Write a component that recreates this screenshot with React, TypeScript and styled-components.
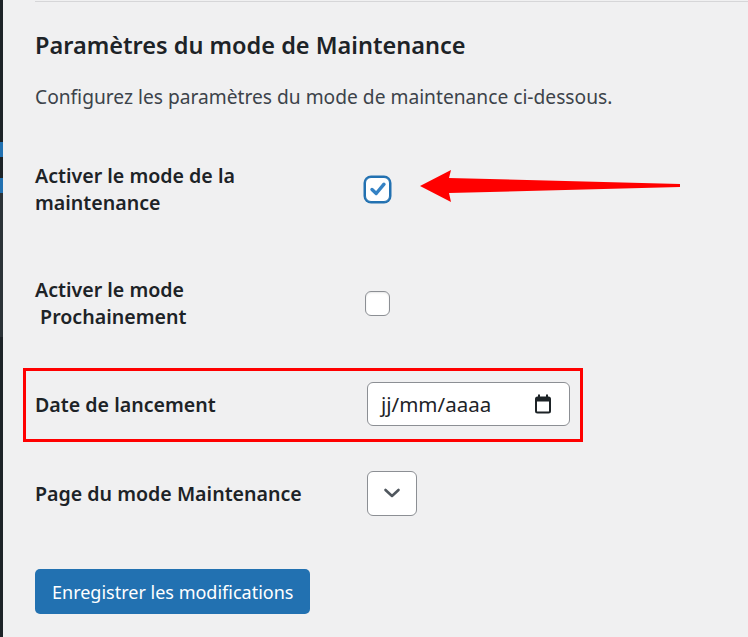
import styled, { createGlobalStyle } from "styled-components";

const GlobalStyle = createGlobalStyle`
    html, body {
        margin: 0;
        padding: 0;
        background: #f0f0f1;
    }
    body {
        font-family: "Noto Sans", "Segoe UI", sans-serif;
        color: #1d2327;
    }
`;

function Checkbox({ checked }: { checked?: boolean }) {
    return (
        <Box $checked={checked}>
            {checked && (
                <svg width="20" height="20" viewBox="0 0 20 20">
                    <path d="M4 10.5 L8.2 14.5 L16 5.2" fill="none" stroke="#3582c4" strokeWidth="3.4" strokeLinecap="round" strokeLinejoin="round" />
                </svg>
            )}
        </Box>
    );
}

function App() {
    return (
        <Page>
            <GlobalStyle />
            <Sidebar>
                <SideSeg $h={142} $c="#1d2327" />
                <SideSeg $h={15} $c="#2271b1" />
                <SideSeg $h={21} $c="#1d2327" />
                <SideSeg $h={15} $c="#2271b1" />
                <SideSeg $h={144} $c="#2c3338" />
                <SideSeg $h={300} $c="#1d2327" />
            </Sidebar>

            <Main>
                <TopRule />
                <Title>Paramètres du mode de Maintenance</Title>
                <Description>Configurez les paramètres du mode de maintenance ci-dessous.</Description>

                <Form>
                    <Row $h={114}>
                        <Label>Activer le mode de la<br />maintenance</Label>
                        <Field><Checkbox checked /></Field>
                    </Row>
                    <Row $h={114}>
                        <Label>Activer le mode<br />{"\u00a0"}Prochainement</Label>
                        <Field><Checkbox /></Field>
                    </Row>
                    <Row $h={88}>
                        <Highlight />
                        <Label>Date de lancement</Label>
                        <Field>
                            <DateField>
                                <span>jj/mm/aaaa</span>
                                <svg width="18" height="20" viewBox="0 0 18 20">
                                    <rect x="4" y="0.5" width="2" height="3.5" fill="#1d2327" />
                                    <rect x="12" y="0.5" width="2" height="3.5" fill="#1d2327" />
                                    <rect x="2" y="3.5" width="14" height="15" rx="1.5" fill="none" stroke="#1d2327" strokeWidth="2" />
                                    <rect x="2" y="3.5" width="14" height="4" fill="#1d2327" />
                                </svg>
                            </DateField>
                        </Field>
                    </Row>
                    <Row $h={90}>
                        <Label>Page du mode Maintenance</Label>
                        <Field>
                            <Select>
                                <svg width="18" height="12" viewBox="0 0 18 12">
                                    <path d="M2.5 3 L9 9 L15.5 3" fill="none" stroke="#50575e" strokeWidth="2.6" strokeLinecap="round" strokeLinejoin="round" />
                                </svg>
                            </Select>
                        </Field>
                    </Row>
                </Form>

                <SaveButton>Enregistrer les modifications</SaveButton>
            </Main>

            <Arrow width="266" height="36" viewBox="0 0 266 36">
                <polygon points="2,18 33,2 31,10 262,16 262,19 31,25 33,34" fill="#ff0000" />
            </Arrow>
        </Page>
    );
}

export default App;

const Page = styled.div`
    position: relative;
    display: flex;
    min-height: 637px;
    overflow: hidden;
`;

const Sidebar = styled.div`
    width: 3px;
    flex-shrink: 0;
    display: flex;
    flex-direction: column;
    background: #1d2327;
`;

const SideSeg = styled.div<{ $h: number; $c: string }>`
    height: ${(p) => p.$h}px;
    flex-shrink: 0;
    background: ${(p) => p.$c};
`;

const Main = styled.main`
    flex: 1;
    margin-left: 32px;
    display: flex;
    flex-direction: column;
    align-items: flex-start;
`;

const TopRule = styled.div`
    align-self: stretch;
    height: 1px;
    margin-top: 1px;
    background: #d6d6d8;
`;

const Title = styled.h2`
    margin: 27px 0 0;
    font-size: 23.5px;
    font-weight: 600;
    line-height: 32px;
    color: #1d2327;
`;

const Description = styled.p`
    margin: 21px 0 0;
    font-size: 19.2px;
    line-height: 29px;
    color: #3c434a;
`;

const Form = styled.div`
    margin-top: 21px;
    align-self: stretch;
    display: flex;
    flex-direction: column;
`;

const Row = styled.div<{ $h: number }>`
    position: relative;
    display: grid;
    grid-template-columns: 330px 1fr;
    align-items: center;
    height: ${(p) => p.$h}px;
`;

const Label = styled.div`
    font-size: 19.6px;
    font-weight: 600;
    line-height: 27px;
    color: #1d2327;
`;

const Field = styled.div`
    display: flex;
    align-items: center;
`;

const Box = styled.span<{ $checked?: boolean }>`
    box-sizing: border-box;
    width: 25px;
    height: 25px;
    display: flex;
    align-items: center;
    justify-content: center;
    background: #fff;
    border-radius: 6px;
    border: 1px solid ${(p) => (p.$checked ? "#2271b1" : "#8c8f94")};
    box-shadow: ${(p) => (p.$checked ? "0 0 0 1.5px #2271b1" : "inset 0 1px 2px rgba(0,0,0,0.1)")};
`;

const DateField = styled.div`
    box-sizing: border-box;
    width: 203px;
    height: 44px;
    margin-left: 2px;
    padding: 0 17px 0 13px;
    display: flex;
    align-items: center;
    justify-content: space-between;
    background: #fff;
    border: 1px solid #8c8f94;
    border-radius: 6px;
    font-size: 20.5px;
    color: #1d2327;
`;

const Select = styled.div`
    box-sizing: border-box;
    width: 50px;
    height: 45px;
    margin-left: 2px;
    display: flex;
    align-items: center;
    justify-content: center;
    background: #fff;
    border: 1px solid #8c8f94;
    border-radius: 6px;
`;

const Highlight = styled.div`
    position: absolute;
    left: -12px;
    top: 8px;
    width: 560px;
    height: 74px;
    box-sizing: border-box;
    border: 3px solid #ff0000;
    pointer-events: none;
`;

const SaveButton = styled.button`
    margin-top: 31px;
    height: 45px;
    padding: 0 17px;
    border: none;
    border-radius: 5px;
    background: #2271b1;
    color: #fff;
    font-family: "Noto Sans", "Segoe UI", sans-serif;
    font-size: 18px;
    cursor: pointer;
`;

const Arrow = styled.svg`
    position: absolute;
    left: 418px;
    top: 168px;
`;
